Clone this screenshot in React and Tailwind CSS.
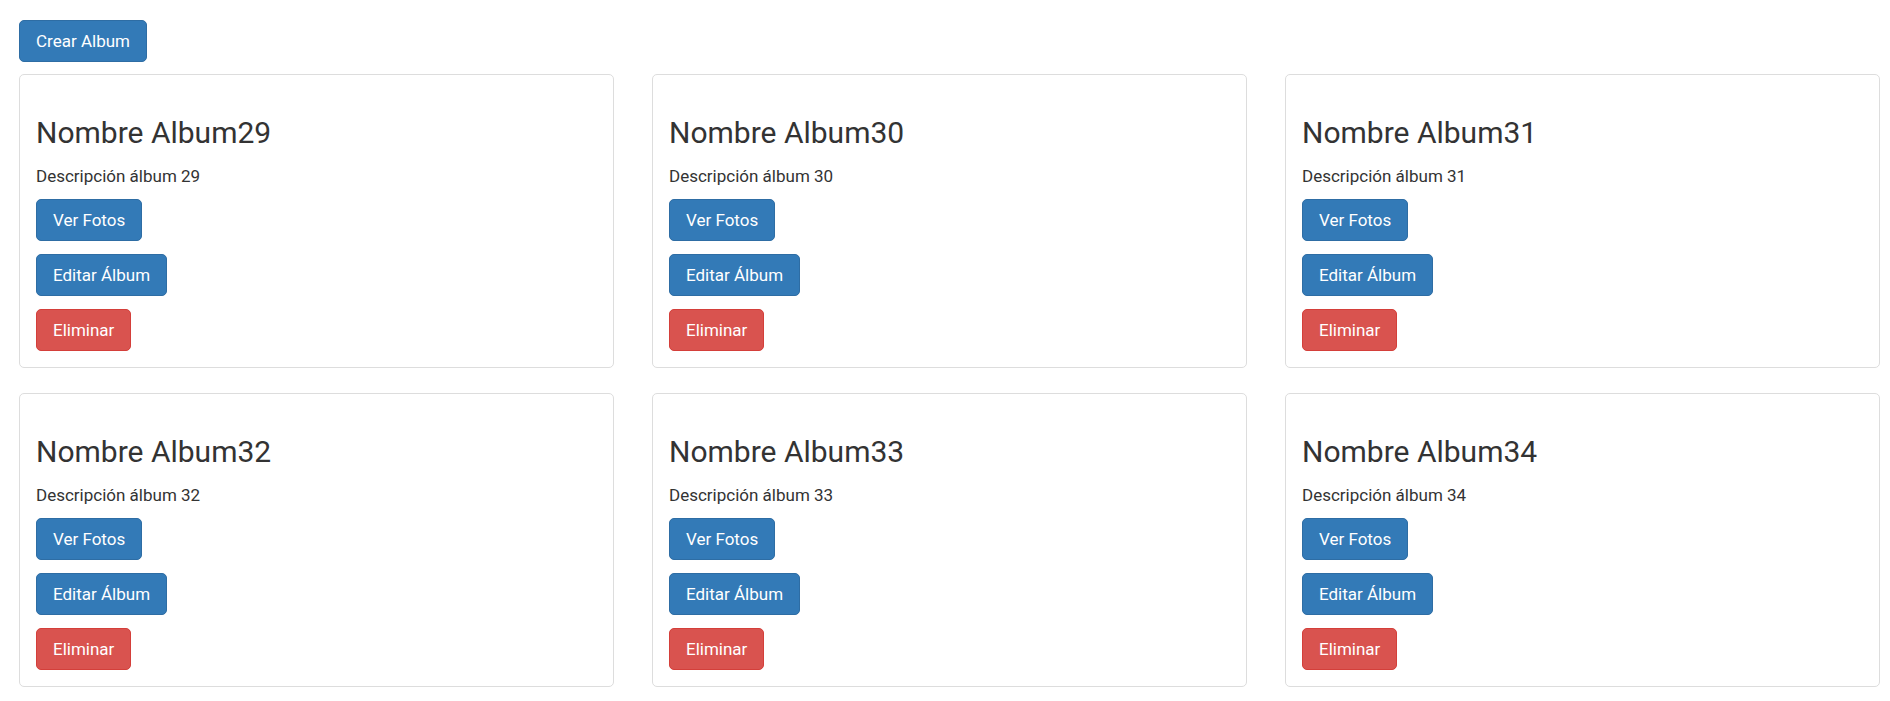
import React from 'react';

const ALBUMS = [29, 30, 31, 32, 33, 34];

function Btn({ children, danger }) {
  const color = danger
    ? 'bg-[#d9534f] border-[#d43f3a]'
    : 'bg-[#337ab7] border-[#2e6da4]';
  return (
    <button
      className={`h-[42px] px-4 rounded-[5px] border text-white text-[17px] font-normal leading-none flex items-center ${color}`}
    >
      {children}
    </button>
  );
}

function AlbumCard({ n }) {
  return (
    <div className="border border-[#dddddd] rounded-[5px] bg-white px-4 pt-[41px] pb-4">
      <h3 className="text-[30px] leading-[33px] font-normal text-[#333333] mb-[15px]">
        Nombre Album{n}
      </h3>
      <p className="text-[17px] leading-6 font-normal text-[#333333] mb-[11px]">
        Descripción álbum {n}
      </p>
      <div className="flex flex-col items-start gap-[13px]">
        <Btn>Ver Fotos</Btn>
        <Btn>Editar Álbum</Btn>
        <Btn danger>Eliminar</Btn>
      </div>
    </div>
  );
}

export default function App() {
  return (
    <div
      className="bg-white min-h-screen pl-[19px] pr-[10px] pt-5"
      style={{ fontFamily: 'Roboto, "Noto Sans", sans-serif' }}
    >
      <Btn>Crear Album</Btn>
      <div className="mt-3 grid grid-cols-3 gap-x-[38px] gap-y-[25px]">
        {ALBUMS.map((n) => (
          <AlbumCard key={n} n={n} />
        ))}
      </div>
    </div>
  );
}
